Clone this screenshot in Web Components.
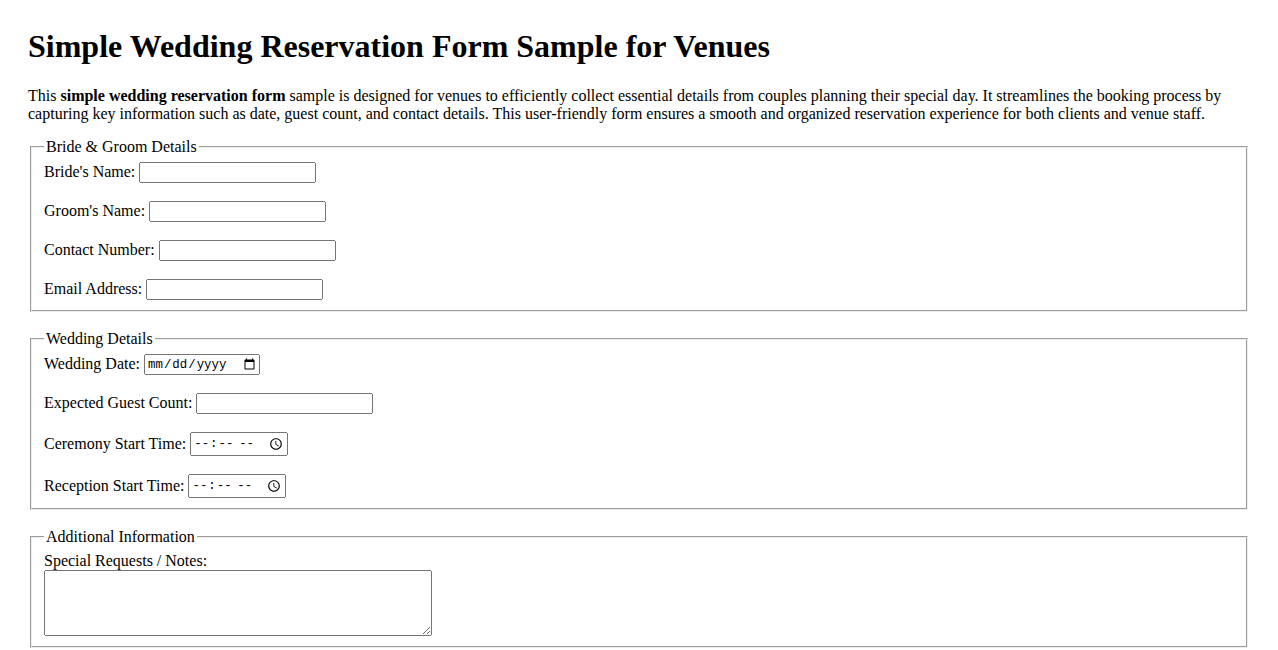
<!DOCTYPE html>
<html lang="en">
<head>
<meta charset="utf-8">
<title>Simple Wedding Reservation Form Sample for Venues</title>
<style>
  body {
    margin: 8px;
    padding: 0 20px;
    background: #fff;
    color: #000;
    font: 16px/normal "Liberation Serif", "Times New Roman", serif;
  }
</style>
</head>
<body>
<page-intro heading="Simple Wedding Reservation Form Sample for Venues">
  This <b>simple wedding reservation form</b> sample is designed for venues to efficiently collect essential details from couples planning their special day. It streamlines the booking process by capturing key information such as date, guest count, and contact details. This user-friendly form ensures a smooth and organized reservation experience for both clients and venue staff.
</page-intro>
<form-section legend="Bride &amp; Groom Details">
  <form-row label="Bride's Name:" type="text"></form-row>
  <form-row label="Groom's Name:" type="text"></form-row>
  <form-row label="Contact Number:" type="tel"></form-row>
  <form-row label="Email Address:" type="email"></form-row>
</form-section>
<form-section legend="Wedding Details">
  <form-row label="Wedding Date:" type="date"></form-row>
  <form-row label="Expected Guest Count:" type="number"></form-row>
  <form-row label="Ceremony Start Time:" type="time"></form-row>
  <form-row label="Reception Start Time:" type="time"></form-row>
</form-section>
<form-section legend="Additional Information">
  <notes-row label="Special Requests / Notes:"></notes-row>
</form-section>
<script>
class PageIntro extends HTMLElement {
  constructor() {
    super();
    this.shadowDOM = this.attachShadow({mode: 'open'});
  }

  connectedCallback() {
    this.shadowDOM.innerHTML = `
      <style>
        :host { display: block; }
        h1 { font-size: 32px; line-height: 36px; margin: 20px 0 23px; }
        p { line-height: 18px; margin: 0 0 15px; }
      </style>
      <h1>${this.getAttribute('heading')}</h1>
      <p><slot></slot></p>
    `;
  }
}

class FormSection extends HTMLElement {
  constructor() {
    super();
    this.shadowDOM = this.attachShadow({mode: 'open'});
  }

  connectedCallback() {
    this.shadowDOM.innerHTML = `
      <style>
        :host { display: block; margin-bottom: 18px; }
        legend { line-height: 18.4px; }
      </style>
      <fieldset>
        <legend></legend>
        <slot></slot>
      </fieldset>
    `;
    this.shadowDOM.querySelector('legend').textContent = this.getAttribute('legend');
  }
}

class FormRow extends HTMLElement {
  constructor() {
    super();
    this.shadowDOM = this.attachShadow({mode: 'open'});
  }

  connectedCallback() {
    this.shadowDOM.innerHTML = `
      <style>
        :host { display: flex; align-items: flex-start; gap: 4px; margin-bottom: 18px; }
        :host(:last-child) { margin-bottom: 0; }
        label { line-height: 18px; padding-top: 1px; }
        input { box-sizing: border-box; margin: 0; width: 177px; height: 21px; }
        input[type=date] { width: 116px; font: 12.4px "Liberation Mono", monospace; }
        input[type=time] { width: 98px; height: 24px; font: 12.4px "Liberation Mono", monospace; }
        input::-webkit-calendar-picker-indicator { font-size: 13.33px; }
        :host([type=time]) label { padding-top: 3px; }
      </style>
      <label></label>
      <input>
    `;
    this.shadowDOM.querySelector('label').textContent = this.getAttribute('label');
    this.shadowDOM.querySelector('input').type = this.getAttribute('type');
  }
}

class NotesRow extends HTMLElement {
  constructor() {
    super();
    this.shadowDOM = this.attachShadow({mode: 'open'});
  }

  connectedCallback() {
    this.shadowDOM.innerHTML = `
      <style>
        :host { display: block; }
        label { display: block; line-height: 18px; }
        textarea { display: block; margin: 0; width: 388px; height: 66px; box-sizing: border-box; }
      </style>
      <label></label>
      <textarea></textarea>
    `;
    this.shadowDOM.querySelector('label').textContent = this.getAttribute('label');
  }
}

customElements.define('page-intro', PageIntro);
customElements.define('form-section', FormSection);
customElements.define('form-row', FormRow);
customElements.define('notes-row', NotesRow);
</script>
</body>
</html>
